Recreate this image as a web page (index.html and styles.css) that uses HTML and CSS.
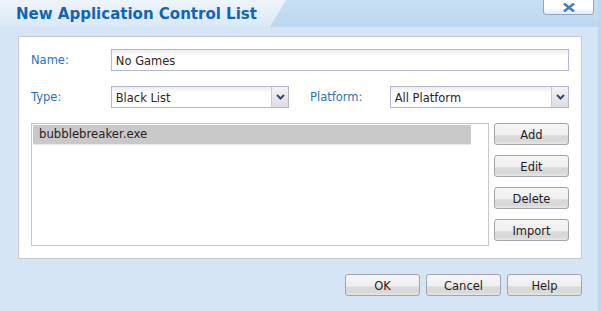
FILE: index.html
```html
<!DOCTYPE html>
<html lang="en">
<head>
  <meta charset="UTF-8" />
  <title>New Application Control List</title>
  <link rel="stylesheet" href="styles.css">
</head>
<body>

  <div class="titlebar">
    <div class="tab"><h1>New Application Control List</h1></div>
    <div class="close-btn">
      <svg width="12" height="9" viewBox="0 0 12 9"><path d="M1 0.5 L11 8.5 M11 0.5 L1 8.5" stroke="#3b82c4" stroke-width="2.6"/></svg>
    </div>
  </div>

  <div class="panel">
    <div class="row">
      <label>Name:</label>
      <input type="text" class="text-input" value="No Games">
    </div>
    <div class="row">
      <label>Type:</label>
      <div class="select small">
        <span>Black List</span>
        <div class="arrow"><svg width="9" height="6" viewBox="0 0 9 6"><path d="M1 1 L4.5 4.5 L8 1" stroke="#2d4b7d" stroke-width="2" fill="none"/></svg></div>
      </div>
      <label class="platform-label">Platform:</label>
      <div class="select">
        <span>All Platform</span>
        <div class="arrow"><svg width="9" height="6" viewBox="0 0 9 6"><path d="M1 1 L4.5 4.5 L8 1" stroke="#2d4b7d" stroke-width="2" fill="none"/></svg></div>
      </div>
    </div>
    <div class="row list-row">
      <div class="listbox">
        <div class="item selected">bubblebreaker.exe</div>
      </div>
      <div class="side-buttons">
        <button>Add</button>
        <button>Edit</button>
        <button>Delete</button>
        <button>Import</button>
      </div>
    </div>
  </div>

  <div class="footer">
    <button>OK</button>
    <button>Cancel</button>
    <button>Help</button>
  </div>

</body>
</html>
```

FILE: styles.css
```css
* {
  margin: 0;
  padding: 0;
  box-sizing: border-box;
}

body {
  width: 601px;
  height: 311px;
  background: #d6e5f5;
  font-family: 'DejaVu Sans', Verdana, sans-serif;
  font-size: 11.5px;
  color: #2b2b2b;
  overflow: hidden;
  border-right: 3px solid #c2d6ea;
}

.titlebar {
  height: 27px;
  display: flex;
  background: linear-gradient(#c7dff4, #bcd7ef);
  position: relative;
}

.tab {
  width: 286px;
  height: 27px;
  background: linear-gradient(#eef5fc, #d9e8f6);
  clip-path: polygon(0 0, 100% 0, 270px 100%, 0 100%);
}

.tab h1 {
  font-family: 'DejaVu Sans Condensed', 'DejaVu Sans', sans-serif;
  font-size: 16.7px;
  font-weight: bold;
  color: #1265b5;
  padding: 3px 0 0 16px;
}

.close-btn {
  position: absolute;
  left: 543px;
  top: -2px;
  width: 51px;
  height: 17px;
  border: 1px solid #8fa6c0;
  border-radius: 0 0 3px 3px;
  background: linear-gradient(#ffffff 55%, #e2ecf7);
  display: flex;
  justify-content: center;
  align-items: center;
  padding-top: 2px;
}

.panel {
  margin: 9px 0 0 18px;
  width: 564px;
  height: 223px;
  background: #fff;
  border: 1px solid #c9cad4;
  padding: 12px 12px 0 12px;
}

.row {
  display: flex;
  align-items: center;
  margin-bottom: 15px;
}

label {
  width: 80px;
  color: #2a72c0;
}

.platform-label {
  margin-left: 21px;
}

.text-input {
  width: 459px;
  height: 22px;
  border: 1px solid #b3b6cc;
  background: linear-gradient(#ececf0, #ffffff 6px);
  font-family: 'DejaVu Sans', sans-serif;
  font-size: 11.5px;
  color: #332222;
  padding: 1px 0 0 4px;
  outline: none;
}

.select {
  width: 180px;
  height: 22px;
  border: 1px solid #b3b6cc;
  background: linear-gradient(#ececf0, #ffffff 6px);
  display: flex;
  align-items: center;
  font-size: 11.5px;
  color: #332222;
}

.select.small {
  width: 179px;
}

.select span {
  flex: 1;
  padding: 1px 0 0 4px;
}

.arrow {
  width: 17px;
  height: 20px;
  border-left: 1px solid #c8cad6;
  background: linear-gradient(#f4f4f6, #dcdde2);
  display: flex;
  justify-content: center;
  align-items: center;
}

.list-row {
  align-items: flex-start;
  margin-bottom: 0;
}

.listbox {
  width: 458px;
  height: 123px;
  border: 1px solid #c8c8c8;
  padding: 1px;
}

.item {
  width: 438px;
  height: 20px;
  padding: 2px 0 0 6px;
  font-size: 11.7px;
  color: #2f2020;
}

.item.selected {
  background: #c9c9c9;
  border-bottom: 1px solid #e6e6e6;
}

.side-buttons {
  margin-left: 5px;
  display: flex;
  flex-direction: column;
  gap: 10px;
}

button {
  width: 75px;
  height: 22px;
  border: 1px solid #a4a4ac;
  border-radius: 3px;
  background: linear-gradient(#f6f6f6 0%, #eeeeee 55%, #dadada 60%, #d8d8d8 85%, #e6e6e6 100%);
  font-family: 'DejaVu Sans', sans-serif;
  font-size: 11.5px;
  color: #1e1e1e;
  padding-top: 1px;
}

.footer {
  display: flex;
  justify-content: flex-end;
  gap: 6px;
  width: 582px;
  margin-top: 15px;
}
```
